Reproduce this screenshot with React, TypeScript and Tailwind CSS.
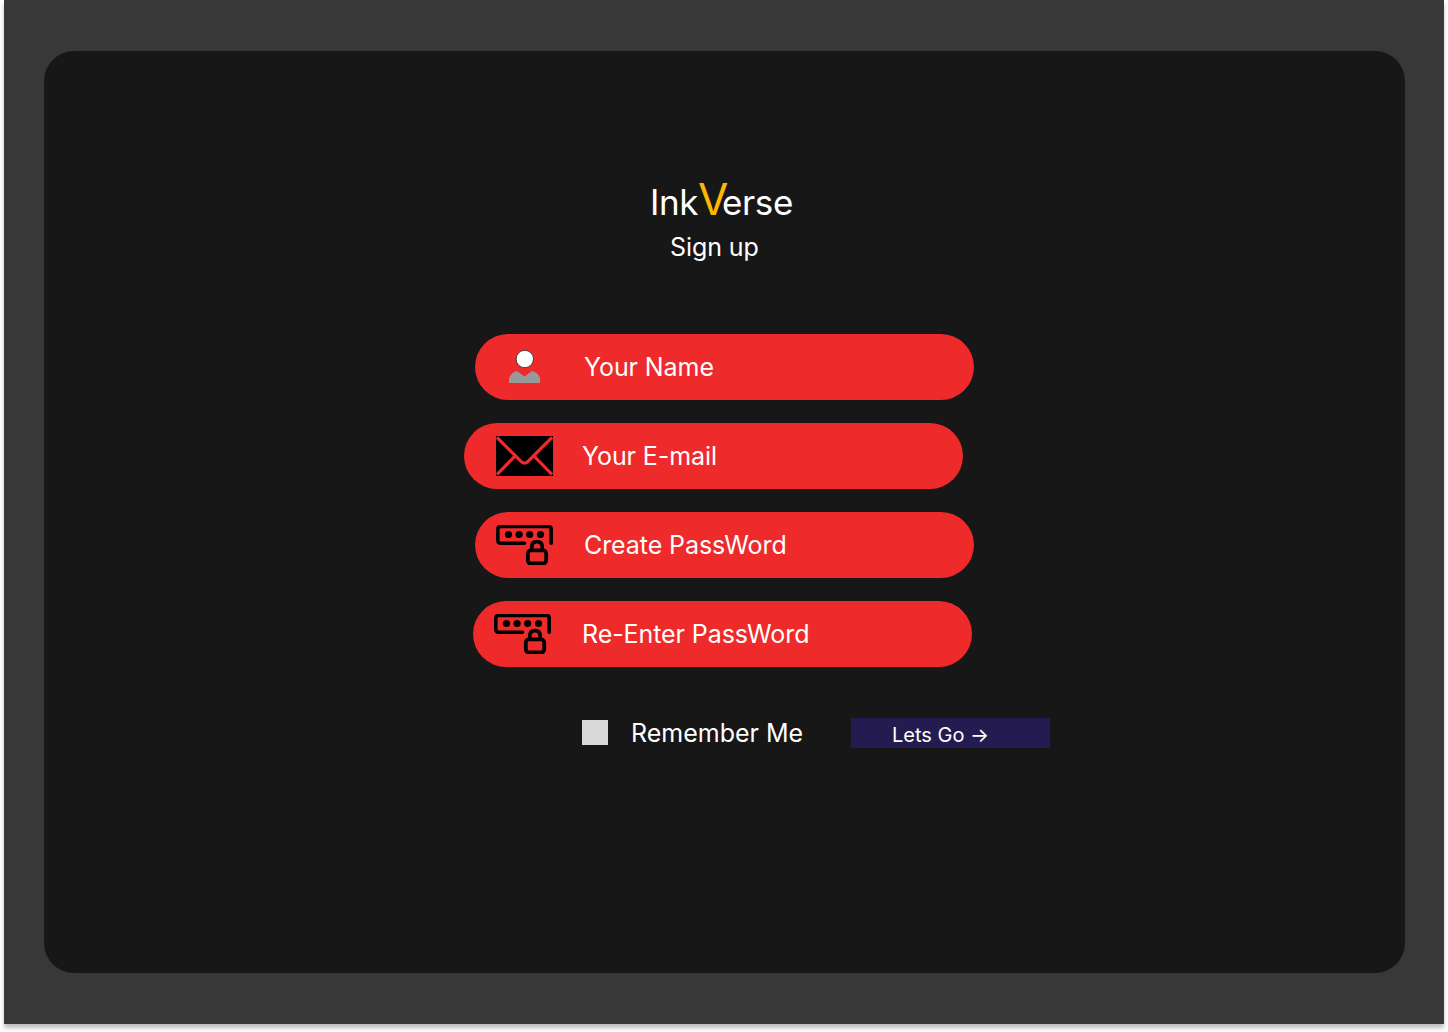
import React from "react";

function PersonIcon() {
  return (
    <svg className="mb-0.5 ml-[34px] h-[34px] w-[31px] shrink-0" viewBox="0 0 31 34" fill="none">
      <circle cx="15.8" cy="10" r="8.7" fill="#fff" stroke="#222" strokeWidth="0.8" />
      <path d="M0 34V29C1.5 25.5 4.5 23 8 22L15.5 27.5L23 22C27 23 30 25.5 31 29V34Z" fill="#999" />
    </svg>
  );
}

function MailIcon() {
  return (
    <svg className="ml-8 h-10 w-[57px] shrink-0" viewBox="0 0 57 40" fill="none">
      <path d="M0 0H57V40H0Z" fill="#000" />
      <path
        d="M1 1.5L25.2 25.6Q28.5 28.7 31.8 25.6L56 1.5M19 20L1 38.5M38 20L56 38.5"
        stroke="#ee2a2a"
        strokeWidth="3.2"
      />
    </svg>
  );
}

function PasswordIcon() {
  return (
    <svg className="ml-[21px] h-10 w-[57px] shrink-0" viewBox="0 0 57 40" fill="none" stroke="#000">
      <path d="M28.5 18.2H4.8Q1.8 18.2 1.8 15.4V4.2Q1.8 1.5 4.8 1.5H52.2Q55.2 1.5 55.2 4.2V18.3" strokeWidth="3.6" strokeLinecap="round" />
      <g fill="#000" stroke="none">
        <circle cx="12.5" cy="9.5" r="3.6" />
        <circle cx="23.1" cy="9.5" r="3.6" />
        <circle cx="33.7" cy="9.5" r="3.6" />
        <circle cx="44.5" cy="9.5" r="3.6" />
      </g>
      <rect x="31.8" y="25.3" width="18.4" height="13.2" rx="3.2" strokeWidth="3.8" />
      <path d="M35.8 25V22Q35.8 16.6 41 16.6Q46.2 16.6 46.2 22V25" strokeWidth="3.6" />
    </svg>
  );
}

type FieldProps = { icon: React.ReactNode; label: string; pill: string; text: string };

function Field({ icon, label, pill, text }: FieldProps) {
  return (
    <div className={`flex h-[66px] w-[499px] items-center rounded-[33px] bg-[#ee2a2a] ${pill}`}>
      {icon}
      <span className={`whitespace-nowrap text-[25px] leading-[30px] tracking-[-0.08px] ${text}`}>{label}</span>
    </div>
  );
}

export default function App() {
  return (
    <div className="h-[1032px] w-[1448px] overflow-hidden bg-white px-1 font-['Inter',sans-serif] font-normal text-white">
      <div className="h-[1024px] w-[1440px] bg-[#383838] px-10 pt-[51px] shadow-[0_4px_4px_rgba(0,0,0,0.25)]">
        <main className="flex h-[922px] w-[1361px] flex-col items-start rounded-[30px] bg-[#171717] pt-[121px]">
          <h1 className="ml-[606px] flex h-[54px] items-baseline whitespace-nowrap text-[35px] leading-[54px] tracking-[-0.4px]">
            <span>Ink</span>
            <span className="-mr-[6px] text-[44px] text-[#ffb800]">V</span>
            <span>erse</span>
          </h1>
          <h2 className="ml-[626px] mt-[6px] text-[25px] leading-[30px] tracking-[-0.1px]">Sign up</h2>
          <div className="mt-[72px] flex flex-col items-start gap-[23px]">
            <Field icon={<PersonIcon />} label="Your Name" pill="ml-[431px]" text="ml-11" />
            <Field icon={<MailIcon />} label="Your E-mail" pill="ml-[420px]" text="ml-[29px]" />
            <Field icon={<PasswordIcon />} label="Create PassWord" pill="ml-[431px]" text="ml-[31px]" />
            <Field icon={<PasswordIcon />} label="Re-Enter PassWord" pill="ml-[429px]" text="ml-[31px]" />
          </div>
          <div className="ml-[538px] mt-[51px] flex h-[30px] items-center">
            <span className="mb-px h-[25px] w-[26px] bg-[#d9d9d9]" />
            <span className="ml-[23px] w-[220px] whitespace-nowrap text-[25px] leading-[30px]">Remember Me</span>
            <button className="h-[30px] w-[199px] bg-[#241c50] pl-[41px] pt-1 text-left text-[20px] leading-[24px]">
              Lets Go -&gt;
            </button>
          </div>
        </main>
      </div>
    </div>
  );
}
